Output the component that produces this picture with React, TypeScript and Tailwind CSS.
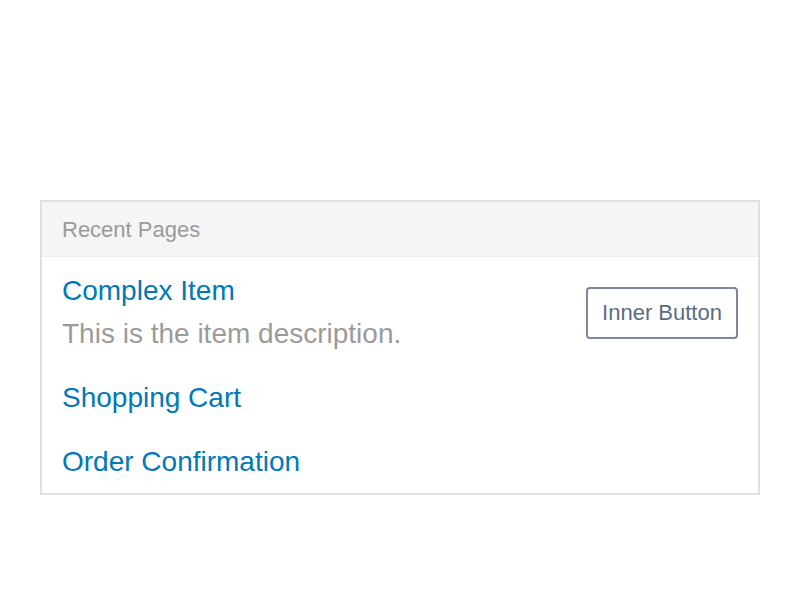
const items = [
  { title: "Complex Item", desc: "This is the item description.", button: "Inner Button", pad: "pt-[18px] pb-4" },
  { title: "Shopping Cart", pad: "py-4" },
  { title: "Order Confirmation", pad: "pt-4 pb-[15px]" },
];

export default function App() {
  return (
    <div className="w-[800px] h-[600px] bg-white pt-[200px] px-[40px] font-['Liberation_Sans',Arial,sans-serif]">
      <div className="border-2 border-[#e0e0e0] bg-white">
        <div className="h-[55px] px-[20px] flex items-center bg-[#f5f5f5] border-b border-[#ebebeb] text-[22px] text-[#9a9a9a]">
          Recent Pages
        </div>
        {items.map((it) => (
          <div key={it.title} className={`flex items-center justify-between px-[20px] ${it.pad}`}>
            <div>
              <div className="text-[28px] leading-[32px] text-[#0079b6]">{it.title}</div>
              {it.desc && (
                <div className="mt-[11px] text-[28px] leading-[32px] text-[#9b9b9b]">{it.desc}</div>
              )}
            </div>
            {it.button && (
              <button className="w-[152px] h-[52px] rounded-[4px] border-2 border-[#7d889c] text-[22px] text-[#5c6b84] bg-white">
                {it.button}
              </button>
            )}
          </div>
        ))}
      </div>
    </div>
  );
}
